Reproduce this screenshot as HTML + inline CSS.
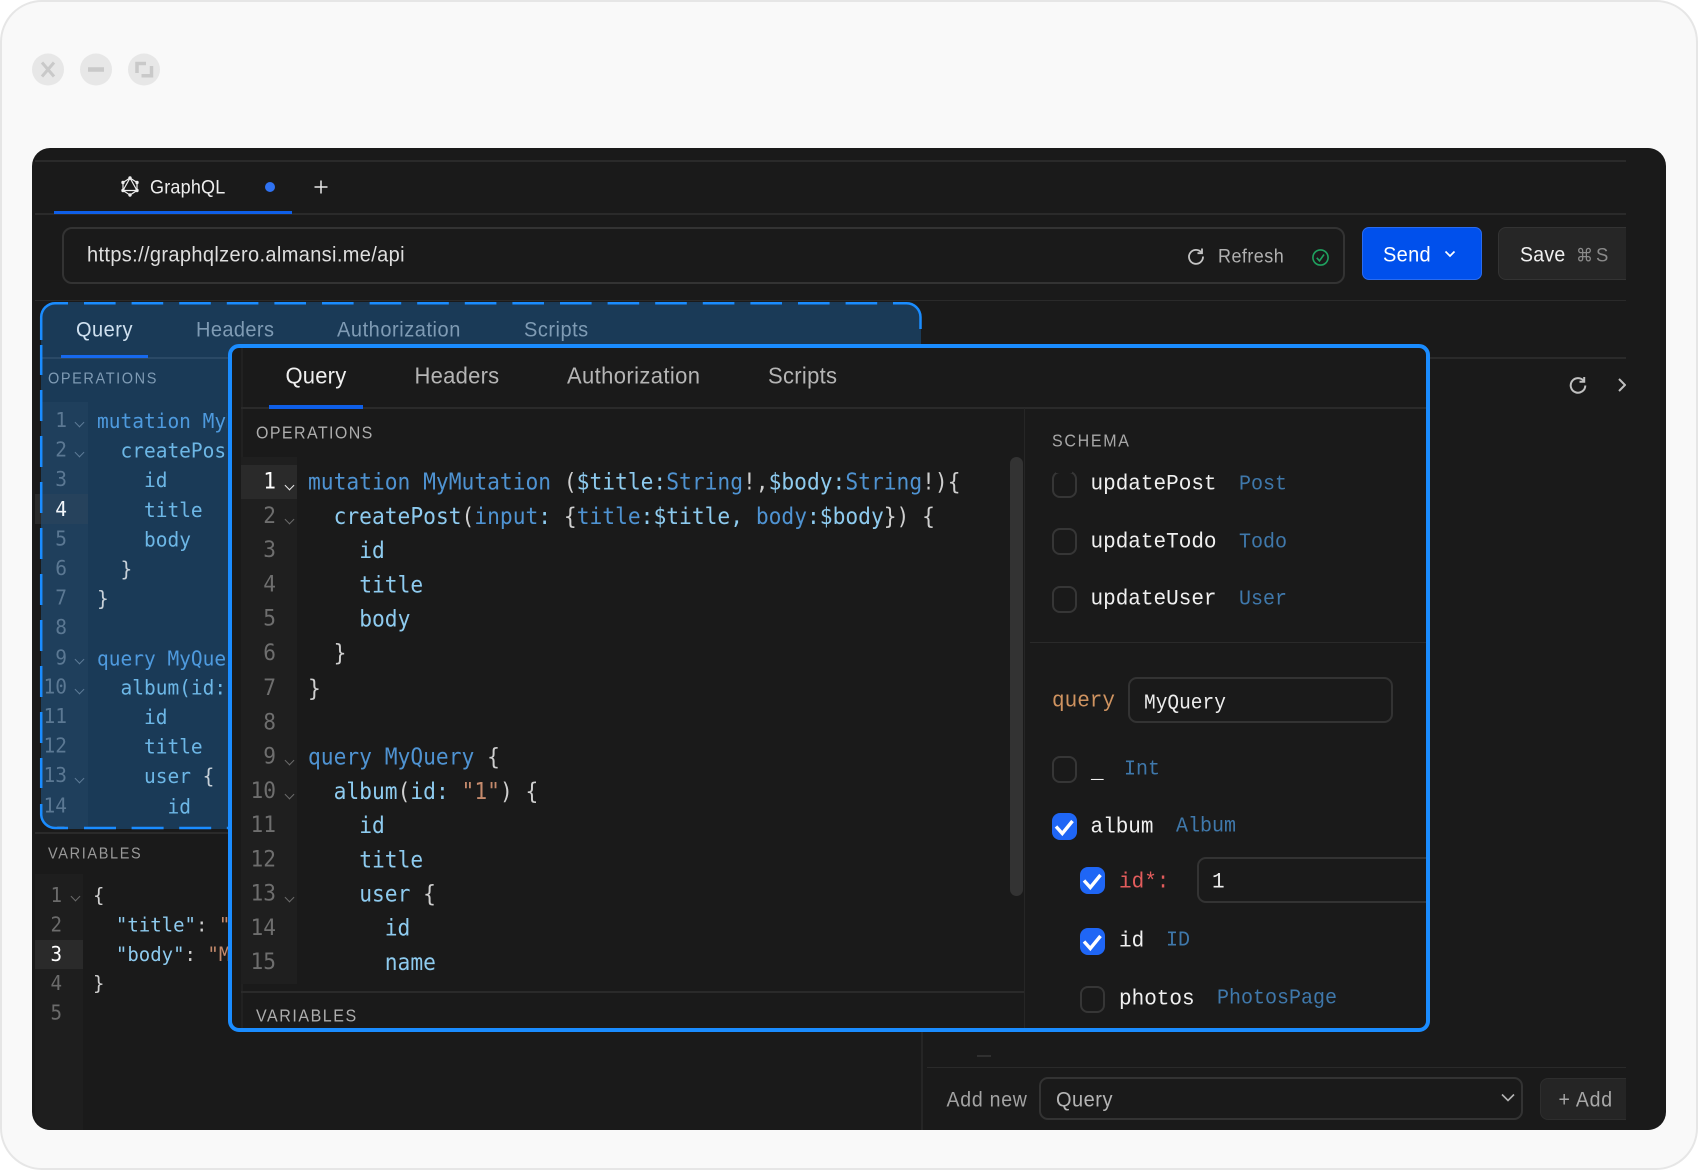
<!DOCTYPE html>
<html><head><meta charset="utf-8"><title>GraphQL</title>
<style>
html,body{margin:0;padding:0;background:#fff}
#win{position:relative;width:1698px;height:1170px;overflow:hidden;background:#fff}
#frame{position:absolute;left:0;top:0;width:1698px;height:1170px;box-sizing:border-box;background:#f9f9f9;border:2px solid #e6e6e6;border-radius:42px}
.abs,.t,.r,pre{position:absolute}
.t{white-space:pre;font-family:"Liberation Sans",sans-serif;line-height:30px;height:30px;transform:scaleY(1.07);transform-origin:0 50%}
.m{font-family:"Liberation Mono",monospace;font-size:21px}
pre{margin:0;font-family:"DejaVu Sans Mono",monospace;white-space:pre;transform-origin:0 0}
.r{background:#2a2a2a}
.ch{position:absolute;width:6px;height:6px;border-right:1.6px solid #6a6a6a;border-bottom:1.6px solid #6a6a6a;transform:rotate(45deg)}
.lc{border-color:#5c7a96}
.k{color:#4f93d2}.p{color:#8ecbef}.g{color:#cfcfcf}.s{color:#c58a6c}
.cb{position:absolute;width:24.5px;height:27px;box-sizing:border-box;border:2px solid #363636;border-radius:8px}
.on{background:#1f66f5;border:0}
.on svg{position:absolute;left:0;top:0}
.in{position:absolute;box-sizing:border-box;border:2px solid #333;border-radius:9px}
.ty{color:#3f78ab;font-size:20px}
</style></head><body>
<div id="win">
<div id="frame"></div>
<svg class="abs" style="left:0;top:0" width="200" height="100" fill="none">
<circle cx="48" cy="69.5" r="16" fill="#e7e7e7"/><circle cx="96" cy="69.5" r="16" fill="#e7e7e7"/><circle cx="144" cy="69.5" r="16" fill="#e7e7e7"/>
<path d="M42 62.500L54 76.500M54 62.500L42 76.500" stroke="#c9c9c9" stroke-width="3"/>
<path d="M88 69.500H104" stroke="#c9c9c9" stroke-width="4.500"/>
<path d="M137 73V63.500H146" stroke="#c9c9c9" stroke-width="3.500"/><path d="M151.500 66V75.800H141.500" stroke="#c9c9c9" stroke-width="3.500"/>
</svg>

<!-- app panel -->
<div class="abs" style="left:32px;top:148px;width:1634px;height:982px;background:#1a1a1a;border-radius:18px;overflow:hidden"></div>
<div class="r" style="left:35px;top:160px;width:1591px;height:1.500px"></div>
<div class="r" style="left:35px;top:212.500px;width:1591px;height:2px"></div>
<div class="r" style="left:35px;top:299.500px;width:1591px;height:1.500px"></div>
<div class="r" style="left:1430px;top:356.500px;width:196px;height:2px"></div>
<div class="abs" style="left:54px;top:211px;width:238px;height:3px;background:#0f5fe8"></div>

<svg class="abs" style="left:120px;top:175px" width="20" height="23" fill="none" stroke="#eee" stroke-width="1.200">
<path d="M10 3L17 7.500V15.500L10 20L3 15.500V7.500Z"/><path d="M10 3L17 15.500H3Z"/>
<g fill="#eee" stroke="none"><circle cx="10" cy="3" r="1.700"/><circle cx="17" cy="7.500" r="1.700"/><circle cx="17" cy="15.500" r="1.700"/><circle cx="10" cy="20" r="1.700"/><circle cx="3" cy="15.500" r="1.700"/><circle cx="3" cy="7.500" r="1.700"/></g>
</svg>
<div class="t" style="left:150px;top:172px;font-size:18px;color:#eee;letter-spacing:.2px">GraphQL</div>
<div class="abs" style="left:265px;top:182px;width:10px;height:10px;border-radius:50%;background:#2f72f2"></div>
<svg class="abs" style="left:313px;top:179px" width="16" height="16"><path d="M8 1.500V14.500M1.500 8H14.500" stroke="#e8e8e8" stroke-width="1.500"/></svg>

<div class="in" style="left:62px;top:227px;width:1283px;height:57px;border-radius:10px"></div>
<div class="t" style="left:87px;top:239.500px;font-size:20px;letter-spacing:.36px;color:#dedede">https://graphqlzero.almansi.me/api</div>
<svg class="abs" style="left:1187px;top:247px" width="18" height="18" fill="none" stroke="#c4c4c4" stroke-width="1.800"><path d="M14.500 5.500A7 7 0 1 0 16 9.500"/><path d="M15 1.500V6.200H10.500"/></svg>
<div class="t" style="left:1218px;top:241px;font-size:18px;letter-spacing:.45px;color:#b0b0b0">Refresh</div>
<svg class="abs" style="left:1311px;top:248px" width="19" height="19" fill="none" stroke="#1fa15f" stroke-width="1.600"><circle cx="9.500" cy="9.500" r="7.600"/><path d="M5.800 9.800L8.500 12.800L13 6.500"/></svg>

<div class="abs" style="left:1362px;top:227px;width:120px;height:53px;box-sizing:border-box;background:#0050ec;border:1.500px solid #2a6cf0;border-radius:7px"></div>
<div class="t" style="left:1383px;top:239.500px;font-size:20px;letter-spacing:.3px;color:#fff">Send</div>
<svg class="abs" style="left:1443px;top:248px" width="14" height="12" fill="none" stroke="#fff" stroke-width="1.700"><path d="M2.500 3.500L7 8L11.500 3.500"/></svg>

<div class="abs" style="left:1498px;top:227px;width:128px;height:53px;overflow:hidden"><div class="abs" style="left:0;top:0;width:150px;height:53px;box-sizing:border-box;background:#262626;border:1.500px solid #333;border-radius:8px"></div></div>
<div class="t" style="left:1520px;top:239.500px;font-size:19.500px;letter-spacing:.25px;color:#f0f0f0">Save</div>
<div class="t" style="left:1576px;top:239.500px;font-size:17px;color:#8a8a8a;font-family:'DejaVu Sans',sans-serif">⌘<span style="font-family:'Liberation Sans';font-size:18.500px;margin-left:3px">S</span></div>

<svg class="abs" style="left:1568px;top:375px" width="20" height="20" fill="none" stroke="#c0c0c0" stroke-width="2"><path d="M15.800 6A7.300 7.300 0 1 0 17.300 10.500"/><path d="M16.200 2V6.700H11.500"/></svg>
<div class="abs" style="left:1612px;top:376px;width:14px;height:18px;overflow:hidden"><svg width="14" height="18" fill="none" stroke="#c0c0c0" stroke-width="2"><path d="M7 3L13 9L7 15"/></svg></div>

<!-- left sections -->
<div class="abs" style="left:35px;top:832px;width:193px;height:1.500px;background:#2a2a2a"></div>
<div class="t" style="left:48px;top:838.500px;font-size:14.500px;letter-spacing:1.650px;color:#9a9a9a">VARIABLES</div>
<div class="abs" style="left:35px;top:874px;width:48px;height:256px;background:#1e1e1e;border-bottom-left-radius:15px"></div>
<div class="abs" style="left:35px;top:940px;width:48px;height:29px;background:#2a2a2a"></div>
<pre style="left:32px;top:880.500px;width:30px;text-align:right;font-size:19.200px;line-height:28.100px;color:#6b6b6b;transform:scaleY(1.050)">1
2
<span style="color:#fff">3</span>
4
5</pre>
<div class="ch" style="left:72px;top:893px;border-width:1.400px"></div>
<pre style="left:93px;top:880.500px;font-size:19px;line-height:28.100px;color:#cfcfcf;transform:scaleY(1.050)">{
  <span class="p">"title"</span>: <span class="s">"New Post"</span>
  <span class="p">"body"</span>: <span class="s">"My body"</span>
}</pre>

<!-- dragged source panel -->
<div class="abs" style="left:35px;top:494px;width:6px;height:30px;background:#2a2a2a"></div>
<div class="abs" style="left:41px;top:302px;width:880px;height:527px;background:#1a3a57;border-radius:14px 14px 14px 14px;overflow:hidden">
 <div class="abs" style="left:-41px;top:-302px;width:1000px;height:900px">
  <div class="abs" style="left:41px;top:357px;width:880px;height:1.500px;background:#2a4966"></div>
  <div class="abs" style="left:61px;top:355px;width:87px;height:3px;background:#1769ee"></div>
  <div class="t" style="left:76px;top:315px;font-size:20px;letter-spacing:.5px;color:#cfe0ef">Query</div>
  <div class="t" style="left:196px;top:315px;font-size:20px;letter-spacing:.4px;color:#7f9bb4">Headers</div>
  <div class="t" style="left:337px;top:315px;font-size:20px;letter-spacing:.55px;color:#7f9bb4">Authorization</div>
  <div class="t" style="left:524px;top:315px;font-size:20px;letter-spacing:.5px;color:#7f9bb4">Scripts</div>
  <div class="t" style="left:48px;top:364px;font-size:14.500px;letter-spacing:1.600px;color:#7f9bb4">OPERATIONS</div>
  <div class="abs" style="left:41px;top:402px;width:46.500px;height:427px;background:#1f3f5c"></div>
  <div class="abs" style="left:41px;top:494px;width:46.500px;height:30px;background:#26425c"></div>
  <pre style="left:36px;top:405.500px;width:31px;text-align:right;font-size:19.500px;line-height:28.200px;color:#5b7893;transform:scaleY(1.050)">1
2
3
<span style="color:#f2f6fa">4</span>
5
6
7
8
9
10
11
12
13
14
15</pre>
  <div class="ch lc" style="left:76px;top:419px"></div>
  <div class="ch lc" style="left:76px;top:449px"></div>
  <div class="ch lc" style="left:76px;top:656px"></div>
  <div class="ch lc" style="left:76px;top:686px"></div>
  <div class="ch lc" style="left:76px;top:775px"></div>
  <div class="abs" style="left:97px;top:402px;width:129.500px;height:427px;overflow:hidden">
  <pre style="left:0;top:4.500px;font-size:19.500px;line-height:28.200px;color:#c7d0d8;transform:scaleY(1.050)"><span style="color:#4e9ade">mutation MyMutation</span>
  <span style="color:#6db7e6">createPost</span>
    <span style="color:#6db7e6">id</span>
    <span style="color:#6db7e6">title</span>
    <span style="color:#6db7e6">body</span>
  }
}

<span style="color:#4e9ade">query MyQuery</span>
  <span style="color:#6db7e6">album(id:</span>
    <span style="color:#6db7e6">id</span>
    <span style="color:#6db7e6">title</span>
    <span style="color:#6db7e6">user</span> {
      <span style="color:#6db7e6">id</span>
      <span style="color:#6db7e6">name</span></pre></div>
 </div>
</div>
<svg class="abs" style="left:0;top:295px" width="930" height="545" fill="none" stroke="#1a8cff" stroke-width="2.500">
<g transform="translate(0,-295)">
<path d="M68 303.200H55A14 14 0 0 0 41.200 317V340M41.200 345V375M41.200 390V421M41.200 436V467M41.200 482V513M41.200 528V559M41.200 574V605M41.200 620V651M41.200 666V697M41.200 712V743M41.200 758V788M41.200 804V815A14 14 0 0 0 55 828H68"/>
<path d="M84 303.200H878" stroke-dasharray="31.600 16"/>
<path d="M893 303.200H906A14 14 0 0 1 920.500 317V329"/>
<path d="M84 828H228" stroke-dasharray="32 15.600"/>
</g></svg>

<!-- bottom bar -->
<div class="abs" style="left:921px;top:1032px;width:1.500px;height:98px;background:#252525"></div>
<div class="abs" style="left:977px;top:1055px;width:14px;height:1.500px;background:#303030"></div>
<div class="abs" style="left:927px;top:1066.500px;width:699px;height:1.500px;background:#2a2a2a"></div>
<div class="t" style="left:946.500px;top:1085px;font-size:19.500px;letter-spacing:.75px;color:#a3a3a3">Add new</div>
<div class="in" style="left:1039px;top:1077px;width:484px;height:43px"></div>
<div class="t" style="left:1056px;top:1085px;font-size:20px;letter-spacing:.5px;color:#b4b4b4">Query</div>
<svg class="abs" style="left:1500px;top:1092px" width="16" height="12" fill="none" stroke="#b4b4b4" stroke-width="1.600"><path d="M2 2.500L8 8.500L14 2.500"/></svg>
<div class="abs" style="left:1540px;top:1078px;width:86px;height:42px;overflow:hidden"><div class="abs" style="left:0;top:0;width:110px;height:42px;box-sizing:border-box;background:#252525;border:1.500px solid #2e2e2e;border-radius:8px"></div></div>
<div class="t" style="left:1558.500px;top:1085px;font-size:19.500px;letter-spacing:.8px;color:#a8a8a8">+ Add</div>

<!-- floating overlay -->
<div class="abs" style="left:228px;top:344px;width:1202px;height:688px;box-sizing:border-box;background:#1a1a1a;border:4px solid #1a8cff;border-radius:11px;overflow:hidden">
 <div class="abs" style="left:-232px;top:-348px;width:1300px;height:800px">
  <div class="abs" style="left:241px;top:348px;width:1.500px;height:684px;background:#212121"></div>
  <div class="abs" style="left:241px;top:406.500px;width:1190px;height:2px;background:#2a2a2a"></div>
  <div class="abs" style="left:269px;top:405px;width:94px;height:3.500px;background:#0f5fe8"></div>
  <div class="t" style="left:285.500px;top:360.500px;font-size:22px;letter-spacing:.2px;color:#f0f0f0">Query</div>
  <div class="t" style="left:414.500px;top:360.500px;font-size:22px;letter-spacing:.25px;color:#b5b5b5">Headers</div>
  <div class="t" style="left:567px;top:360.500px;font-size:22px;letter-spacing:.38px;color:#b5b5b5">Authorization</div>
  <div class="t" style="left:768px;top:360.500px;font-size:22px;letter-spacing:.3px;color:#b5b5b5">Scripts</div>
  <div class="t" style="left:256px;top:418.500px;font-size:16px;letter-spacing:1.400px;color:#adadad">OPERATIONS</div>

  <div class="abs" style="left:241px;top:457px;width:56px;height:527px;background:#1f1f1f"></div>
  <div class="abs" style="left:241px;top:465px;width:56px;height:34px;background:#2a2a2a"></div>
  <pre style="left:236px;top:464px;width:40px;text-align:right;font-size:21.150px;line-height:32.100px;color:#6e6e6e;transform:scaleY(1.070)"><span style="color:#fff">1</span>
2
3
4
5
6
7
8
9
10
11
12
13
14
15</pre>
  <div class="ch" style="left:286px;top:482px;border-color:#e8e8e8"></div>
  <div class="ch" style="left:286px;top:516px"></div>
  <div class="ch" style="left:286px;top:757px"></div>
  <div class="ch" style="left:286px;top:791px"></div>
  <div class="ch" style="left:286px;top:894px"></div>
  <pre style="left:308px;top:466.300px;font-size:21.260px;line-height:32.100px;color:#cfcfcf;transform:scaleY(1.070)"><span class="k">mutation MyMutation</span> (<span class="p">$title:</span><span class="k">String</span>!,<span class="p">$body:</span><span class="k">String</span>!){
  <span class="p">createPost</span>(<span class="k">input</span><span class="p">:</span> {<span class="k">title</span><span class="p">:$title,</span> <span class="k">body</span><span class="p">:$body</span>}) {
    <span class="p">id</span>
    <span class="p">title</span>
    <span class="p">body</span>
  }
}

<span class="k">query MyQuery</span> {
  <span class="p">album</span>(<span class="p">id:</span> <span class="s">"1"</span>) {
    <span class="p">id</span>
    <span class="p">title</span>
    <span class="p">user</span> {
      <span class="p">id</span>
      <span class="p">name</span></pre>

  <div class="abs" style="left:1010px;top:457px;width:13px;height:439px;border-radius:7px;background:#333"></div>
  <div class="abs" style="left:241px;top:991px;width:783px;height:1.500px;background:#2a2a2a"></div>
  <div class="t" style="left:256px;top:1002px;font-size:16px;letter-spacing:1.550px;color:#adadad">VARIABLES</div>
  <div class="abs" style="left:1023.500px;top:408px;width:1.500px;height:624px;background:#262626"></div>

  <!-- schema -->
  <div class="t" style="left:1052px;top:426.500px;font-size:16px;letter-spacing:1.700px;color:#a8a8a8">SCHEMA</div>
  <div class="cb" style="left:1052px;top:471px"></div>
  <div class="abs" style="left:1056px;top:470px;width:16px;height:3px;background:#1a1a1a"></div>
  <div class="t m" style="left:1090.500px;top:469.500px;color:#f0f0f0">updatePost</div>
  <div class="t m ty" style="left:1239px;top:469.500px">Post</div>
  <div class="cb" style="left:1052px;top:528px"></div>
  <div class="t m" style="left:1090.500px;top:527.500px;color:#f0f0f0">updateTodo</div>
  <div class="t m ty" style="left:1239px;top:527.500px">Todo</div>
  <div class="cb" style="left:1052px;top:586px"></div>
  <div class="t m" style="left:1090.500px;top:584.500px;color:#f0f0f0">updateUser</div>
  <div class="t m ty" style="left:1239px;top:584.500px">User</div>
  <div class="abs" style="left:1030px;top:641.500px;width:400px;height:1.500px;background:#2a2a2a"></div>

  <div class="t m" style="left:1052px;top:687px;color:#cf9360">query</div>
  <div class="in" style="left:1128px;top:677px;width:265px;height:46px"></div>
  <div class="t m" style="left:1144px;top:688px;color:#ededed;font-size:19.500px">MyQuery</div>

  <div class="cb" style="left:1052px;top:756px"></div>
  <div class="t m" style="left:1091px;top:757.500px;color:#f0f0f0">_</div>
  <div class="t m ty" style="left:1124px;top:755px">Int</div>

  <div class="cb on" style="left:1052px;top:813px"><svg width="25" height="28" fill="none" stroke="#fff" stroke-width="3.400"><path d="M4 13.500L10.300 20.500L20.500 8"/></svg></div>
  <div class="t m" style="left:1090.500px;top:813px;color:#f0f0f0">album</div>
  <div class="t m ty" style="left:1176px;top:812px">Album</div>

  <div class="cb on" style="left:1080px;top:867px"><svg width="25" height="28" fill="none" stroke="#fff" stroke-width="3.400"><path d="M4 13.500L10.300 20.500L20.500 8"/></svg></div>
  <div class="t m" style="left:1119px;top:868px;color:#e25c5c">id*:</div>
  <div class="in" style="left:1197px;top:857px;width:280px;height:46px"></div>
  <div class="t m" style="left:1212px;top:868px;color:#ededed">1</div>

  <div class="cb on" style="left:1080px;top:928px"><svg width="25" height="28" fill="none" stroke="#fff" stroke-width="3.400"><path d="M4 13.500L10.300 20.500L20.500 8"/></svg></div>
  <div class="t m" style="left:1119px;top:927px;color:#f0f0f0">id</div>
  <div class="t m ty" style="left:1166px;top:926px">ID</div>

  <div class="cb" style="left:1080px;top:986px"></div>
  <div class="t m" style="left:1119px;top:985px;color:#f0f0f0">photos</div>
  <div class="t m ty" style="left:1217px;top:983.500px">PhotosPage</div>
 </div>
</div>
</div>
</body></html>
